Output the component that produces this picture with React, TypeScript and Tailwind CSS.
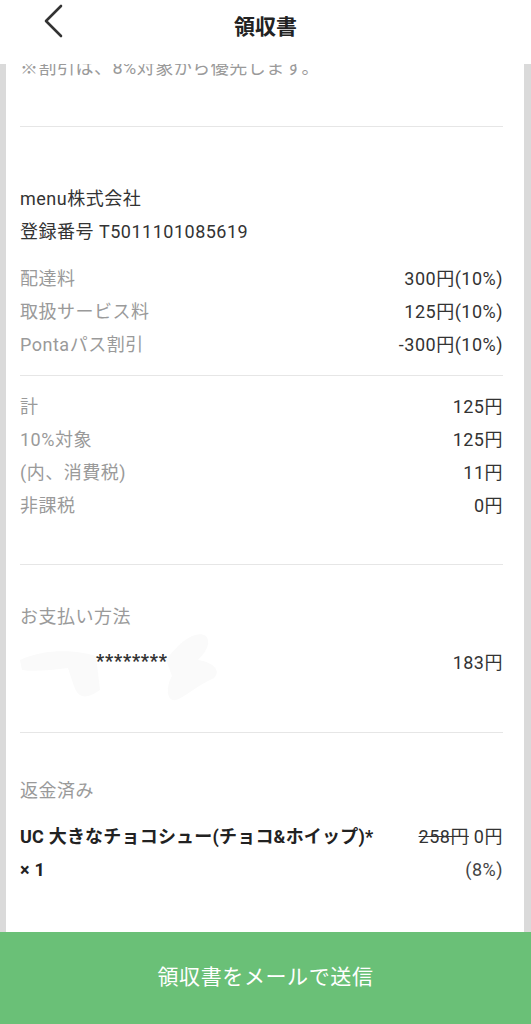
import React from "react";

const font = { fontFamily: '"Roboto", "Noto Sans CJK JP", sans-serif' };

const Row: React.FC<{ label: string; value: string }> = ({ label, value }) => (
  <div className="flex justify-between h-[33px] items-center">
    <span className="text-[#9a9a9a]">{label}</span>
    <span className="text-[#333]">{value}</span>
  </div>
);

const Divider = () => <div className="h-px bg-[#e6e6e6]" />;

const App: React.FC = () => {
  return (
    <div
      className="h-screen w-full flex flex-col bg-[#dadada] text-[18px] tracking-[0.5px] overflow-hidden"
      style={font}
    >
      {/* header */}
      <div className="h-16 shrink-0 bg-white relative z-10">
        <button className="absolute left-[40px] top-[4px] w-[26px] h-[34px] flex items-center justify-center">
          <svg width="22" height="34" viewBox="0 0 22 34" fill="none">
            <path d="M19 2 L4 17 L19 32" stroke="#333" strokeWidth="2.6" strokeLinecap="round" strokeLinejoin="round" />
          </svg>
        </button>
        <h1 className="text-center text-[21px] font-bold text-[#222] pt-[12px] leading-[30px] tracking-normal">
          領収書
        </h1>
      </div>

      {/* body */}
      <div className="flex-1 overflow-hidden">
        <div className="ml-[6px] mr-[7px] bg-white pl-[14px] pr-[21px] -mt-[13px] h-[1000px]">
          <div className="h-[33px] flex items-center text-[#9a9a9a]">
            ※割引は、8%対象から優先します。
          </div>
          <div className="h-[42px]" />
          <Divider />

          <div className="pt-[55px]">
            <div className="h-[33px] flex items-center text-[#333]">menu株式会社</div>
            <div className="h-[33px] flex items-center text-[#333]">登録番号 T5011101085619</div>
          </div>

          <div className="pt-[14px] pb-[14px]">
            <Row label="配達料" value="300円(10%)" />
            <Row label="取扱サービス料" value="125円(10%)" />
            <Row label="Pontaパス割引" value="-300円(10%)" />
          </div>
          <Divider />

          <div className="pt-[14px] pb-[42px]">
            <Row label="計" value="125円" />
            <Row label="10%対象" value="125円" />
            <Row label="(内、消費税)" value="11円" />
            <Row label="非課税" value="0円" />
          </div>
          <Divider />

          <div className="pt-[35px] pb-[53px]">
            <div className="h-[33px] flex items-center text-[#9a9a9a]">お支払い方法</div>
            <div className="relative mt-[13px] h-[33px] flex items-center justify-between">
              <svg
                className="absolute -left-[4px] -top-[26px]"
                width="210"
                height="85"
                viewBox="0 0 210 85"
              >
                <path
                  d="M4 40 C30 28 60 30 80 36 L84 70 C70 80 62 78 58 66 L52 48 C36 50 18 52 6 50 Z"
                  fill="#fafafa"
                />
                <path
                  d="M150 40 C165 20 180 10 190 16 C196 24 188 34 182 40 C196 42 206 50 198 58 C180 66 168 78 160 80 C150 82 150 66 156 56 Z"
                  fill="#fafafa"
                />
              </svg>
              <span className="relative ml-[76px] text-[18px] font-bold text-[#333] tracking-[0.8px] -mt-[4px]">
                ********
              </span>
              <span className="relative text-[#333]">183円</span>
            </div>
          </div>
          <Divider />

          <div className="pt-[41px]">
            <div className="h-[33px] flex items-center text-[#9a9a9a]">返金済み</div>
            <div className="flex justify-between mt-[13px]">
              <div className="font-bold text-[#222] leading-[33px] tracking-[0.2px]">
                <div>UC 大きなチョコシュー(チョコ&amp;ホイップ)*</div>
                <div>× 1</div>
              </div>
              <div className="text-right text-[#333] leading-[33px]">
                <div>
                  <span className="line-through">258円</span> 0円
                </div>
                <div className="text-[#444]">(8%)</div>
              </div>
            </div>
          </div>
        </div>
      </div>

      {/* footer button */}
      <button className="h-[92px] shrink-0 w-full bg-[#6ac077] text-white text-[21px] tracking-[0.6px]">
        領収書をメールで送信
      </button>
    </div>
  );
};

export default App;
